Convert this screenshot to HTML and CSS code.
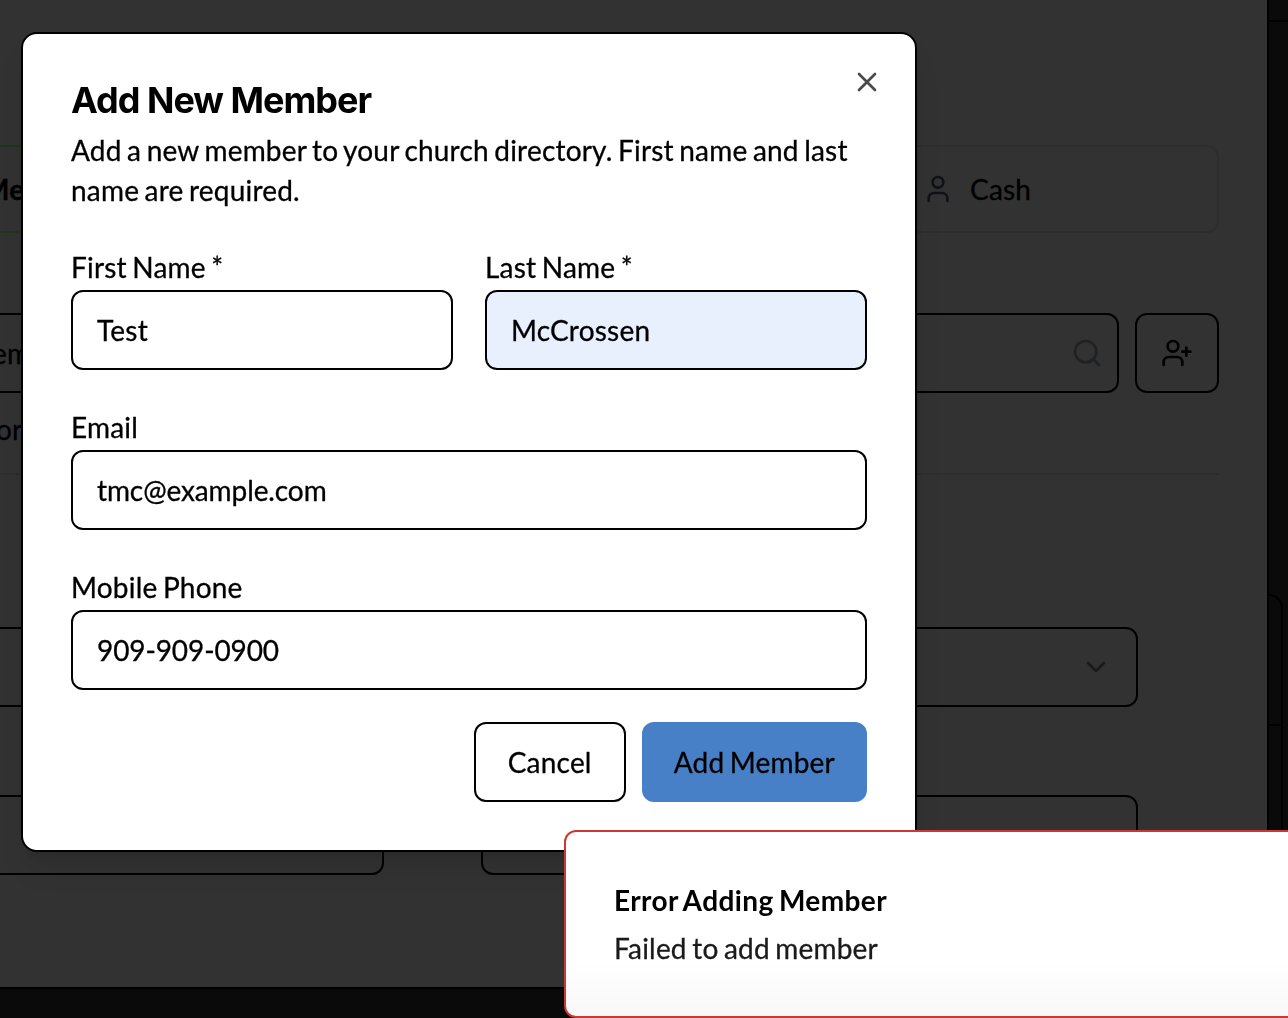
FILE: index.html
```html
<!DOCTYPE html>
<html lang="en">
<head>
<meta charset="utf-8">
<title>Add New Member</title>
<link rel="stylesheet" href="styles.css">
</head>
<body>
<div class="page">
  <main class="panel">
    <div class="tabs">
      <div class="tab tab-active"><span class="cut cut-me">Me</span></div>
      <div class="tab tab-cash">
        <svg class="icon" width="32" height="32" viewBox="0 0 24 24"><path d="M19 21v-2a4 4 0 0 0-4-4H9a4 4 0 0 0-4 4v2"/><circle cx="12" cy="7" r="4"/></svg>
        <span>Cash</span>
      </div>
    </div>
    <div class="search-row">
      <div class="search">
        <span class="cut cut-em">em</span>
        <svg class="icon icon-search" width="32" height="32" viewBox="0 0 24 24"><circle cx="11" cy="11" r="8"/><path d="m21 21-4.3-4.3"/></svg>
      </div>
      <div class="add-button">
        <svg class="icon" width="32" height="32" viewBox="0 0 24 24"><path d="M16 21v-2a4 4 0 0 0-4-4H6a4 4 0 0 0-4 4v2"/><circle cx="9" cy="7" r="4"/><path d="M19 8v6M22 11h-6"/></svg>
      </div>
    </div>
    <div class="hint"><span class="cut cut-or">or</span></div>
    <div class="select">
      <svg class="icon" width="32" height="32" viewBox="0 0 24 24"><path d="m6 9 6 6 6-6"/></svg>
    </div>
    <div class="field-row">
      <div class="box box-left"></div>
      <div class="box box-right"></div>
    </div>
  </main>
  <aside class="side">
    <div class="side-head"></div>
    <div class="side-card"><div class="side-card-head"></div></div>
  </aside>
</div>

<section class="modal" role="dialog">
  <svg class="close" width="32" height="32" viewBox="0 0 24 24"><path d="M18 6 6 18M6 6l12 12"/></svg>
  <h2 class="modal-title">Add New Member</h2>
  <p class="modal-text">Add a new member to your church directory. First name and last name are required.</p>
  <form class="form">
    <div class="form-pair">
      <div class="field"><label class="label">First Name *</label><div class="input">Test</div></div>
      <div class="field"><label class="label">Last Name *</label><div class="input input-filled">McCrossen</div></div>
    </div>
    <div class="field"><label class="label">Email</label><div class="input input-tight">tmc@example.com</div></div>
    <div class="field"><label class="label">Mobile Phone</label><div class="input input-tight">909-909-0900</div></div>
    <div class="actions">
      <button type="button" class="button button-outline">Cancel</button>
      <button type="button" class="button button-primary">Add Member</button>
    </div>
  </form>
</section>

<div class="toast" role="alert">
  <div class="toast-title">Error Adding Member</div>
  <div class="toast-text">Failed to add member</div>
</div>
</body>
</html>
```
FILE: styles.css
```css
* { box-sizing: border-box; }

body {
  margin: 0;
  width: 1288px;
  height: 1018px;
  overflow: hidden;
  background: #0a0a0a;
  color: #000;
  font-family: Lato, "Liberation Sans", sans-serif;
  font-size: 28px;
  line-height: 40px;
  letter-spacing: 0.2px;
  word-spacing: -1.9px;
  -webkit-text-stroke: 0.3px currentColor;
}

.page { display: flex; height: 989px; }

.panel {
  width: 1269px;
  padding: 145px 48px 0 0;
  background: #323232;
  border-right: 2px solid #000;
  border-bottom: 2px solid #000;
  overflow: hidden;
}

.icon, .close {
  display: block;
  flex: none;
  fill: none;
  stroke: currentColor;
  stroke-width: 2;
  stroke-linecap: round;
  stroke-linejoin: round;
}

.tabs { display: grid; grid-template-columns: 400px 1fr; gap: 400px; height: 88px; }
.tab { display: flex; align-items: center; border: 2px solid #2d2d2d; border-radius: 12px; }
.tab-active { border-color: #1a371b; border-left: 0; border-radius: 0 12px 12px 0; font-weight: 700; }
.tab-cash { gap: 16px; padding: 0 0 0 120px; }
.tab-cash .icon { color: #101217; }
.cut { display: block; }
.cut-me { margin-left: -17px; }
.cut-em { margin-left: -8px; }
.cut-or { margin-left: -4px; }

.search-row { display: flex; gap: 16px; height: 80px; margin-top: 80px; }
.search {
  flex: 1;
  display: flex;
  align-items: center;
  justify-content: space-between;
  padding-right: 14px;
  border: 2px solid #000;
  border-left: 0;
  border-radius: 0 12px 12px 0;
}
.icon-search { color: #1f2123; }
.add-button {
  display: flex;
  align-items: center;
  justify-content: center;
  width: 84px;
  border: 2px solid #000;
  border-radius: 12px;
}
.hint { height: 82px; padding-top: 16px; border-bottom: 2px solid #2d2d2d; }

.select {
  display: flex;
  align-items: center;
  justify-content: flex-end;
  width: 1138px;
  height: 80px;
  margin-top: 152px;
  padding-right: 24px;
  border: 2px solid #000;
  border-left: 0;
  border-radius: 0 12px 12px 0;
  color: #191919;
}
.field-row { display: grid; grid-template-columns: 384px 657px; gap: 97px; margin-top: 88px; }
.box { height: 80px; border: 2px solid #000; border-radius: 12px; }
.box-left { border-left: 0; border-radius: 0 12px 12px 0; }

.side { flex: 1; display: flex; flex-direction: column; }
.side-head { height: 22px; border-bottom: 2px solid #000; }
.side-card {
  flex: 1;
  width: 14px;
  margin-top: 572px;
  border: 2px solid #000;
  border-left: 0;
  border-bottom: 0;
  border-radius: 0 14px 0 0;
}
.side-card-head { height: 130px; border-bottom: 2px solid #000; }

.modal {
  position: fixed;
  left: 21px;
  top: 32px;
  width: 896px;
  height: 820px;
  padding: 48px;
  background: #fff;
  border: 2px solid #000;
  border-radius: 16px;
  box-shadow: 0 20px 30px -6px rgba(0, 0, 0, .1), 0 8px 12px -4px rgba(0, 0, 0, .1);
}
.close { position: absolute; right: 32px; top: 32px; color: #4a4a4a; }
.modal-title {
  margin: 0;
  font: 700 36px/36px Inter, sans-serif;
  letter-spacing: -1px;
  word-spacing: 0;
  -webkit-text-stroke: 0;
}
.modal-text { margin: 12px 0 0; }
.form { display: flex; flex-direction: column; gap: 32px; margin-top: 32px; }
.form-pair { display: grid; grid-template-columns: 1fr 1fr; gap: 32px; }
.field { display: flex; flex-direction: column; }
.label { height: 48px; padding-top: 5px; }
.input {
  display: flex;
  align-items: center;
  height: 80px;
  padding: 0 24px;
  background: #fff;
  border: 2px solid #000;
  border-radius: 12px;
}
.input-filled { background: #e8f0fe; }
.input-tight { letter-spacing: -0.1px; }
.actions { display: flex; justify-content: flex-end; gap: 16px; }
.button {
  height: 80px;
  padding: 0 32px;
  border: 2px solid #000;
  border-radius: 12px;
  background: #fff;
  color: #000;
  font: inherit;
  letter-spacing: inherit;
  word-spacing: inherit;
}
.button-primary { border: 0; background: #4880c8; }

.toast {
  position: fixed;
  left: 564px;
  top: 830px;
  width: 760px;
  height: 188px;
  padding: 48px;
  border: 2px solid #cb3a31;
  border-radius: 12px;
  background: linear-gradient(#fff 70%, #f8f8f8);
}
.toast-title { font-weight: 700; letter-spacing: 0.4px; -webkit-text-stroke: 0; }
.toast-text { margin-top: 8px; color: #1a1a1a; }
```
